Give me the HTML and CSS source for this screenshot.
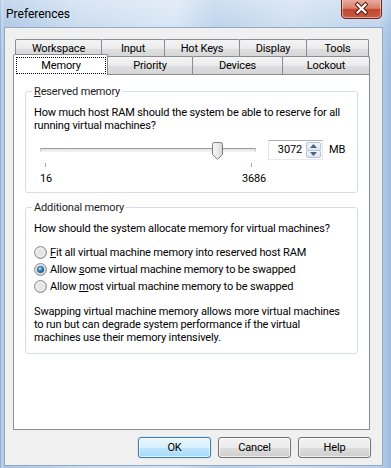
FILE: index.html
```html
<!DOCTYPE html>
<html>
<head>
<meta charset="utf-8">
<title>Preferences</title>
<link rel="stylesheet" href="styles.css">
</head>
<body>
<div class="frame">
  <div class="titlebar">
    <span class="title">Preferences</span>
    <div class="close">
      <svg width="41" height="19" viewBox="0 0 41 19">
        <defs>
          <linearGradient id="cg" x1="0" y1="0" x2="0" y2="1">
            <stop offset="0" stop-color="#e9aa9c"/>
            <stop offset="0.45" stop-color="#d6806b"/>
            <stop offset="0.5" stop-color="#c4472f"/>
            <stop offset="1" stop-color="#c65a3f"/>
          </linearGradient>
        </defs>
        <path d="M0.5,0 V14 Q0.5,18.5 5,18.5 H36 Q40.5,18.5 40.5,14 V0" fill="url(#cg)" stroke="#6b2418"/>
        <path d="M1.5,0 V14 Q1.5,17.5 5,17.5 H36 Q39.5,17.5 39.5,14 V0" fill="none" stroke="rgba(255,255,255,0.45)"/>
        <path d="M16.5,4.5 L24.5,12.5 M24.5,4.5 L16.5,12.5" stroke="#5a1a10" stroke-width="4.2" stroke-linecap="square"/>
        <path d="M16.5,4.5 L24.5,12.5 M24.5,4.5 L16.5,12.5" stroke="#ffffff" stroke-width="2.2" stroke-linecap="square"/>
      </svg>
    </div>
  </div>
  <div class="client">
    <div class="tabs">
      <div class="tabrow back">
        <div class="tab t-workspace">Workspace</div>
        <div class="tab t-input">Input</div>
        <div class="tab t-hotkeys">Hot Keys</div>
        <div class="tab t-display">Display</div>
        <div class="tab t-tools">Tools</div>
      </div>
      <div class="tabrow front">
        <div class="tab selected t-memory"><span class="focus">Memory</span></div>
        <div class="tab t-priority">Priority</div>
        <div class="tab t-devices">Devices</div>
        <div class="tab t-lockout">Lockout</div>
      </div>
    </div>
    <div class="panel">
      <fieldset class="group reserved">
        <legend><u>R</u>eserved memory</legend>
        <p class="text">How much host RAM should the system be able to reserve for all<br>running virtual machines?</p>
        <div class="slider-row">
          <div class="slider">
            <div class="track-area">
              <div class="track"></div>
              <svg class="thumb" style="left:172px" width="11" height="18" viewBox="0 0 11 18">
                <defs>
                  <linearGradient id="tg" x1="0" y1="0" x2="1" y2="0">
                    <stop offset="0" stop-color="#f6f6f6"/>
                    <stop offset="0.5" stop-color="#eaeaea"/>
                    <stop offset="1" stop-color="#d6d6d6"/>
                  </linearGradient>
                </defs>
                <path d="M0.5,2.5 Q0.5,0.5 2.5,0.5 H8.5 Q10.5,0.5 10.5,2.5 V12.5 L5.5,17.3 L0.5,12.5 Z" fill="url(#tg)" stroke="#7c7c7c"/>
              </svg>
            </div>
            <div class="ticks"><i></i><i></i></div>
            <div class="labels"><span>16</span><span>3686</span></div>
          </div>
          <div class="spin">
            <span class="spin-value">3072</span>
            <div class="spin-btns">
              <div class="spin-btn">
                <svg width="7" height="4" viewBox="0 0 7 4"><path d="M0,4 L3.5,0 L7,4 Z" fill="#4d6185"/></svg>
              </div>
              <div class="spin-btn">
                <svg width="7" height="4" viewBox="0 0 7 4"><path d="M0,0 L3.5,4 L7,0 Z" fill="#4d6185"/></svg>
              </div>
            </div>
          </div>
          <span class="unit">MB</span>
        </div>
      </fieldset>
      <fieldset class="group additional">
        <legend>Additional memory</legend>
        <p class="text">How should the system allocate memory for virtual machines?</p>
        <div class="radios">
          <label class="radio">
            <svg width="13" height="13" viewBox="0 0 13 13">
              <defs>
                <linearGradient id="rg" x1="0" y1="0" x2="1" y2="1">
                  <stop offset="0" stop-color="#ececec"/>
                  <stop offset="1" stop-color="#c6c6c6"/>
                </linearGradient>
              </defs>
              <circle cx="6.5" cy="6.5" r="6" fill="url(#rg)" stroke="#8e8f8f"/>
              <circle cx="6.5" cy="6.5" r="4.2" fill="#e6e6e6" stroke="#f8f8f8" stroke-width="0.8"/>
            </svg>
            <span><u>F</u>it all virtual machine memory into reserved host RAM</span>
          </label>
          <label class="radio">
            <svg width="13" height="13" viewBox="0 0 13 13">
              <defs>
                <radialGradient id="dot" cx="0.4" cy="0.35" r="0.7">
                  <stop offset="0" stop-color="#b8e6fb"/>
                  <stop offset="0.45" stop-color="#3f93c8"/>
                  <stop offset="1" stop-color="#0f4e7c"/>
                </radialGradient>
              </defs>
              <circle cx="6.5" cy="6.5" r="6" fill="url(#rg)" stroke="#8e8f8f"/>
              <circle cx="6.5" cy="6.5" r="4.2" fill="#eeeeee"/>
              <circle cx="6.5" cy="6.5" r="3.3" fill="url(#dot)" stroke="#1c4f78" stroke-width="0.6"/>
            </svg>
            <span>Allow <u>s</u>ome virtual machine memory to be swapped</span>
          </label>
          <label class="radio">
            <svg width="13" height="13" viewBox="0 0 13 13">
              <circle cx="6.5" cy="6.5" r="6" fill="url(#rg)" stroke="#8e8f8f"/>
              <circle cx="6.5" cy="6.5" r="4.2" fill="#e6e6e6" stroke="#f8f8f8" stroke-width="0.8"/>
            </svg>
            <span>Allow <u>m</u>ost virtual machine memory to be swapped</span>
          </label>
        </div>
        <p class="text note">Swapping virtual machine memory allows more virtual machines<br>to run but can degrade system performance if the virtual<br>machines use their memory intensively.</p>
      </fieldset>
    </div>
    <div class="buttons">
      <button class="btn default">OK</button>
      <button class="btn">Cancel</button>
      <button class="btn">Help</button>
    </div>
  </div>
</div>
</body>
</html>
```
FILE: styles.css
```css
* { box-sizing: border-box; }

html, body {
  margin: 0;
  padding: 0;
}

body {
  width: 391px;
  height: 468px;
  overflow: hidden;
  font-family: Roboto, "Liberation Sans", sans-serif;
  font-size: 11px;
  letter-spacing: -0.15px;
  color: #000;
}

.frame {
  height: 468px;
  display: flex;
  flex-direction: column;
  background:
    linear-gradient(to bottom, rgba(255,255,255,0.35) 0, rgba(255,255,255,0.1) 27px, rgba(255,255,255,0) 60px),
    linear-gradient(to right, #7fa3cf 0, #c3d7ee 2px, #a9c4e4 4px, #c6d9ee 20%, #d4e3f3 45%, #b7cfe9 55%, #cadcef 75%, #b9d0ea 97%, #9dbbe0 100%);
}

.titlebar {
  height: 27px;
  flex: none;
  display: flex;
  justify-content: space-between;
  align-items: flex-start;
  padding: 0 9px 0 6px;
}

.title {
  font-size: 12px;
  letter-spacing: 0;
  line-height: 28px;
  color: #000;
}

.close {
  height: 19px;
  line-height: 0;
}

.client {
  flex: 1;
  margin: 0 8px 2px 4px;
  background: #f0f0f0;
  border: 1px solid #93a9c3;
  padding: 11px 12px 0 8px;
}

/* Tabs */
.tabrow {
  display: flex;
  height: 18px;
}

.tabrow.back {
  padding-left: 2px;
}

.tabrow.front {
  margin-top: -1px;
}

.tab {
  height: 18px;
  border: 1px solid #898c95;
  border-bottom: none;
  border-radius: 2px 2px 0 0;
  margin-right: -1px;
  background: linear-gradient(to bottom, #f4f4f4 0, #ebebeb 50%, #dedede 51%, #d6d6d6 100%);
  text-align: center;
  line-height: 18px;
  color: #000;
  white-space: nowrap;
}

.t-workspace { width: 87px; }
.t-input { width: 64px; }
.t-hotkeys { width: 76px; }
.t-display { width: 68px; }
.t-tools { width: 63px; }

.t-memory { width: 95px; }
.t-priority { width: 86px; }
.t-devices { width: 91px; }
.t-lockout { width: 88px; }

.tab.selected {
  position: relative;
  z-index: 2;
  height: 21px;
  margin-top: -2px;
  background: #fff;
}

.focus {
  display: block;
  height: 17px;
  margin: 2px 1px 0 2px;
  border: 1px dotted #000;
  line-height: 15px;
}

/* Panel */
.panel {
  position: relative;
  z-index: 1;
  height: 356px;
  background: #fff;
  border: 1px solid #898c95;
  padding: 0 11px;
  overflow: hidden;
}

.group {
  margin: 0;
  border: 1px solid #d5dfe5;
  border-radius: 3px;
  padding: 0 8px;
  min-width: 0;
}

.group legend {
  padding: 0 2px;
  margin-left: -2px;
  line-height: 13px;
  color: #1e1e1e;
}

.group.reserved {
  margin-top: 10px;
  padding-bottom: 7px;
}

.group.additional {
  margin-top: 8px;
  padding-bottom: 9px;
}

.text {
  margin: 8px 0 0 0;
  line-height: 13px;
  white-space: nowrap;
}

.text.note {
  margin-top: 10px;
}

u {
  text-decoration: underline;
  text-underline-offset: 1px;
}

/* Slider */
.slider-row {
  display: flex;
  align-items: flex-start;
  margin-top: 8px;
}

.slider {
  width: 216px;
  margin-left: 6px;
}

.track-area {
  position: relative;
  height: 20px;
}

.track {
  position: relative;
  top: 8px;
  height: 4px;
  border: 1px solid #c4c4c4;
  border-top-color: #9a9a9a;
  border-bottom-color: #f2f2f2;
  background: #e7eaea;
  border-radius: 1px;
}

.thumb {
  position: absolute;
  top: 2px;
  display: block;
}

.ticks {
  display: flex;
  justify-content: space-between;
  margin-top: 3px;
  padding: 0 4px 0 5px;
  height: 4px;
}

.ticks i {
  display: block;
  width: 1px;
  height: 4px;
  background: #a8a8a8;
}

.labels {
  display: flex;
  justify-content: space-between;
  margin: 5px -18px 0 -14px;
  line-height: 13px;
}

.labels span {
  width: 40px;
  text-align: center;
}

/* Spin box */
.spin {
  display: flex;
  align-items: stretch;
  margin-left: 12px;
  width: 55px;
  height: 20px;
  background: #fff;
  border: 1px solid #e2e3ea;
  border-top-color: #abadb3;
  border-bottom-color: #e3e9ef;
  padding: 1px 1px 1px 0;
}

.spin-value {
  flex: 1;
  text-align: right;
  line-height: 16px;
  padding-right: 4px;
}

.spin-btns {
  display: flex;
  flex-direction: column;
  width: 15px;
}

.spin-btn {
  flex: 1;
  display: flex;
  align-items: center;
  justify-content: center;
  border: 1px solid #b6c3d3;
  border-radius: 2px;
  background: linear-gradient(to bottom, #f2f6fa, #dce6f0);
}

.spin-btn + .spin-btn {
  margin-top: -1px;
}

.spin-btn svg {
  display: block;
}

.unit {
  margin-left: 6px;
  line-height: 20px;
}

/* Radios */
.radios {
  margin-top: 9px;
}

.radio {
  display: flex;
  align-items: center;
  height: 17px;
}

.radio svg {
  display: block;
  flex: none;
  margin-right: 3px;
}

/* Buttons */
.buttons {
  display: flex;
  justify-content: flex-end;
  gap: 7px;
  margin-top: 7px;
  margin-right: -1px;
}

.btn {
  width: 73px;
  height: 21px;
  padding: 0;
  font-family: inherit;
  font-size: 11px;
  letter-spacing: inherit;
  color: #000;
  border: 1px solid #707070;
  border-radius: 3px;
  background: linear-gradient(to bottom, #f2f2f2 0, #ebebeb 50%, #dddddd 51%, #cfcfcf 100%);
  box-shadow: inset 0 0 0 1px rgba(255,255,255,0.7);
}

.btn.default {
  border-color: #3c7fb1;
  background: linear-gradient(to bottom, #eaf6fd 0, #d9f0fc 50%, #bee6fd 51%, #a7d9f5 100%);
  box-shadow: inset 0 0 0 1px rgba(255,255,255,0.6), 0 0 1px #48a2d6;
}
```
